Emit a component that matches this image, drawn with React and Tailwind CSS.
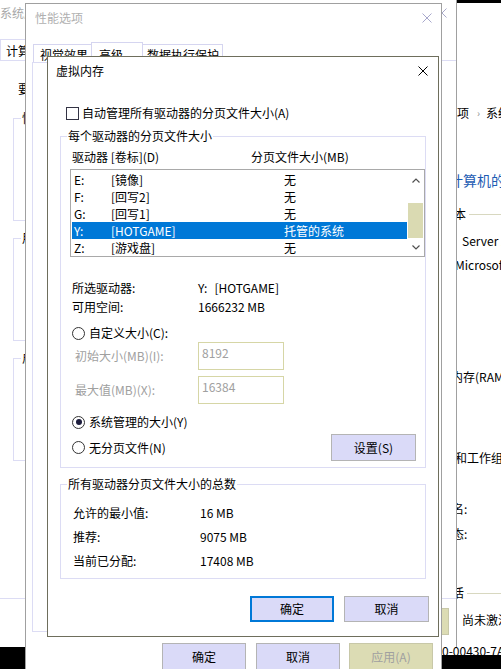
import React from 'react';

const drives = [
  { d: 'E:', label: '[镜像]', size: '无' },
  { d: 'F:', label: '[回写2]', size: '无' },
  { d: 'G:', label: '[回写1]', size: '无' },
  { d: 'Y:', label: '[HOTGAME]', size: '托管的系统', sel: true },
  { d: 'Z:', label: '[游戏盘]', size: '无' },
];

const CloseX = ({ size = 10, color = '#000000', width = 1 }) => (
  <svg width={size} height={size} viewBox="0 0 10 10" className="shrink-0">
    <path d="M0.5 0.5L9.5 9.5M9.5 0.5L0.5 9.5" stroke={color} strokeWidth={width} fill="none" />
  </svg>
);

const Radio = ({ checked }) => (
  <span className="flex h-[13px] w-[13px] shrink-0 items-center justify-center rounded-full border border-[#333333] bg-white">
    {checked && <span className="h-[6px] w-[6px] rounded-full bg-[#1c1c3c]" />}
  </span>
);

const GroupBox = ({ label, className = '', children }) => (
  <div className={`relative border border-[#dcdcf4] ${className}`}>
    <span className="absolute -top-[8px] left-[6px] bg-white px-[1px] leading-[14px]">{label}</span>
    {children}
  </div>
);

const Chevron = ({ up }) => (
  <svg width="8" height="5" viewBox="0 0 8 5">
    <path d={up ? 'M0.5 4.5L4 1L7.5 4.5' : 'M0.5 0.5L4 4L7.5 0.5'} stroke="#505050" strokeWidth="1.2" fill="none" />
  </svg>
);

const btn = 'flex items-center justify-center bg-[#dadaf8] leading-[14px]';

// 最底层：控制面板“系统”窗口
const ControlPanel = () => (
  <div className="absolute left-[200px] top-[3px] flex h-[652px] w-[301px] flex-col overflow-hidden bg-white pl-[242px] whitespace-nowrap leading-[14px]">
    <div className="mt-[57px] h-px bg-[#dcdcf4]" />
    <div className="mt-[6px] h-px bg-[#cfcfcf]" />
    <div className="mt-[40px] flex h-[14px] items-center pl-[15px]">
      <span>项</span>
      <span className="ml-[8px] text-[10px] text-[#909090]">›</span>
      <span className="ml-[6px]">系统</span>
    </div>
    <div className="mt-[31px] h-px bg-[#dcdcf4]" />
    <div className="mt-[21px] ml-[7px] text-[14px] leading-[16px] text-[#1e5cb3]">计算机的基本信息</div>
    <div className="mt-[19px] flex h-[14px] items-center">
      <span>版本</span>
      <span className="ml-[3px] h-px flex-1 bg-[#d8d8c0]" />
    </div>
    <div className="mt-[13px] ml-[20px] h-[14px]">Server 2019</div>
    <div className="mt-[10px] ml-[13px] h-[14px]">Microsoft Corporation</div>
    <div className="mt-[58px] h-px bg-[#dcdcf4]" />
    <div className="mt-[40px] ml-[9px] h-[14px]">内存(RAM):</div>
    <div className="mt-[67px] ml-[13px] h-[14px]">和工作组设置</div>
    <div className="mt-[37px] ml-[10px] h-[14px]">名:</div>
    <div className="mt-[11px] ml-[10px] h-[14px]">态:</div>
    <div className="mt-[45px] flex h-[14px] items-center pl-[10px]">
      <span>活</span>
      <span className="ml-[3px] h-px flex-1 bg-[#d8d8c0]" />
    </div>
    <div className="mt-[13px] ml-[20px] h-[14px]">尚未激活</div>
    <div className="mt-[17px] h-[14px]">0-00430-7AA</div>
  </div>
);

// 第二层：系统属性
const SystemProps = () => (
  <div className="absolute left-0 top-0 flex h-[647px] w-[457px] flex-col border-r border-[#a0a0a0] bg-white whitespace-nowrap leading-[14px]">
    <div className="flex h-[26px] items-center justify-between pr-[9px]">
      <span className="text-[#a8a8a8]">系统属性</span>
      <CloseX color="#a8a8c8" />
    </div>
    <div className="mt-[13px] flex">
      <div className="h-[21px] border border-b-0 border-[#dcdcf4] pl-[5px] pr-[6px] pt-[4px]">计算机名</div>
    </div>
    <div className="h-px bg-[#dcdcf4]" />
    <div className="mt-[21px] ml-[18px] h-[14px]">要进行大多数更改</div>
    {[['性能', 'mt-[22px]'], ['用户配置文件', 'mt-[17px]'], ['启动和故障恢复', 'mt-[17px]']].map(([l, m]) => (
      <div key={l} className={`relative ml-[13px] h-[103px] w-[420px] border border-[#dcdcf4] ${m}`}>
        <span className="absolute -top-[8px] left-[7px] bg-white px-[1px]">{l}</span>
      </div>
    ))}
    <div className="mt-[137px] h-px bg-[#dcdcf4]" />
    <div className="mt-[9px] flex justify-end pr-[7px]">
      <div className="h-[27px] w-[78px] border border-[#c8c8a8] bg-[#dcdcb4]" />
    </div>
  </div>
);

// 第三层：性能选项
const PerfOptions = () => (
  <div className="absolute left-[25px] top-[3px] flex h-[700px] w-[417px] flex-col border border-[#a0a0a0] bg-white whitespace-nowrap leading-[14px]">
    <div className="flex h-[28px] items-center justify-between pl-[9px] pr-[9px]">
      <span className="text-[#b0b0b0]">性能选项</span>
      <CloseX color="#a8a8cc" />
    </div>
    <div className="flex h-[30px] items-end pl-[7px]">
      <div className="h-[18px] w-[59px] border border-b-0 border-[#d5d5f0] pl-[6px] pt-[3px]">视觉效果</div>
      <div className="-ml-px h-[20px] w-[52px] border border-b-0 border-[#d5d5f0] pl-[7px] pt-[5px]">高级</div>
      <div className="-ml-px h-[18px] w-[81px] border border-b-0 border-[#d5d5f0] pl-[4px] pt-[3px]">数据执行保护</div>
    </div>
    <div className="ml-[6px] h-[570px] w-[402px] border border-[#dcdcf4]" />
    <div className="mt-[11px] flex pl-[136px]">
      <div className={`${btn} h-[28px] w-[84px] border border-[#b4b4b4]`}>确定</div>
      <div className={`${btn} ml-[10px] h-[28px] w-[84px] border border-[#b4b4b4]`}>取消</div>
      <div className="ml-[9px] flex h-[28px] w-[84px] items-center justify-center border border-[#c8c8a8] bg-[#dcdcb4] text-[#a0a0a0]">应用(A)</div>
    </div>
  </div>
);

// 最上层：虚拟内存
const VirtualMemory = () => (
  <div className="absolute left-[47px] top-[56px] flex h-[581px] w-[392px] flex-col border border-[#6e6e5c] bg-white whitespace-nowrap leading-[14px]">
    <div className="flex h-[27px] items-center justify-between pl-[8px] pr-[10px]">
      <span>虚拟内存</span>
      <CloseX />
    </div>

    <div className="mt-[22px] flex h-[14px] items-center gap-[3px] pl-[18px]">
      <span className="h-[13px] w-[13px] border border-[#333344] bg-white" />
      <span>自动管理所有驱动器的分页文件大小(A)</span>
    </div>

    <GroupBox label="每个驱动器的分页文件大小" className="mx-[12px] mt-[16px] pb-[6px]">
      <div className="mt-[13px] flex h-[14px] pl-[11px]">
        <span className="w-[179px]">驱动器 [卷标](D)</span>
        <span>分页文件大小(MB)</span>
      </div>

      <div className="ml-[9px] mt-[5px] flex h-[88px] w-[355px] border border-[#a9a9a9]">
        <div className="flex-1 pl-px pt-px">
          {drives.map((r) => (
            <div
              key={r.d}
              className={`flex h-[17px] items-center ${r.sel ? 'bg-[#0078d7] text-white' : ''}`}
            >
              <span className="w-[39px] pl-[2px]">{r.d}</span>
              <span className="w-[173px]">{r.label}</span>
              <span>{r.size}</span>
            </div>
          ))}
        </div>
        <div className="flex w-[17px] flex-col items-center">
          <div className="flex h-[20px] items-center"><Chevron up /></div>
          <div className="mt-[13px] h-[35px] w-[15px] bg-[#dadab2]" />
          <div className="flex h-[18px] items-center"><Chevron /></div>
        </div>
      </div>

      <div className="mt-[21px] flex h-[19px] items-center pl-[11px]">
        <span className="w-[126px]">所选驱动器:</span>
        <span>Y:</span>
        <span className="ml-[7px]">[HOTGAME]</span>
      </div>
      <div className="flex h-[19px] items-center pl-[11px]">
        <span className="w-[126px]">可用空间:</span>
        <span>1666232 MB</span>
      </div>

      <div className="mt-[10px] flex h-[14px] items-center gap-[4px] pl-[11px]">
        <Radio />
        <span>自定义大小(C):</span>
      </div>
      <div className="mt-[2px] flex items-center pl-[14px]">
        <span className="w-[123px] text-[#a0a0a0]">初始大小(MB)(I):</span>
        <div className="h-[28px] w-[86px] border border-[#d6d6a6] pl-[3px] pt-[3px] text-[#a0a0a0]">8192</div>
      </div>
      <div className="mt-[6px] flex items-center pl-[14px]">
        <span className="w-[123px] text-[#a0a0a0]">最大值(MB)(X):</span>
        <div className="h-[28px] w-[86px] border border-[#d6d6a6] pl-[3px] pt-[3px] text-[#a0a0a0]">16384</div>
      </div>

      <div className="mt-[11px] flex h-[14px] items-center gap-[4px] pl-[11px]">
        <Radio checked />
        <span>系统管理的大小(Y)</span>
      </div>
      <div className="mt-[5px] flex h-[27px] items-center pl-[11px] pr-[9px]">
        <Radio />
        <span className="ml-[4px]">无分页文件(N)</span>
        <div className={`${btn} ml-auto h-[27px] w-[85px] border border-[#b4b4b4]`}>设置(S)</div>
      </div>
    </GroupBox>

    <GroupBox label="所有驱动器分页文件大小的总数" className="mx-[12px] mt-[16px] pb-[5px]">
      <div className="mt-[16px]">
        {[
          ['允许的最小值:', '16 MB'],
          ['推荐:', '9075 MB'],
          ['当前已分配:', '17408 MB'],
        ].map(([k, v]) => (
          <div key={k} className="flex h-[24px] items-center pl-[12px]">
            <span className="w-[127px]">{k}</span>
            <span>{v}</span>
          </div>
        ))}
      </div>
    </GroupBox>

    <div className="mt-[17px] flex justify-end gap-[10px] pr-[9px]">
      <div className={`${btn} h-[26px] w-[84px] border-2 border-[#0078d7]`}>确定</div>
      <div className={`${btn} h-[26px] w-[85px] border border-[#b4b4b4]`}>取消</div>
    </div>
  </div>
);

export default function App() {
  return (
    <div className="relative h-[669px] w-[501px] overflow-hidden bg-black font-['Noto_Sans_CJK_SC',sans-serif] text-[12px] text-black">
      <ControlPanel />
      <SystemProps />
      <PerfOptions />
      <VirtualMemory />
    </div>
  );
}
